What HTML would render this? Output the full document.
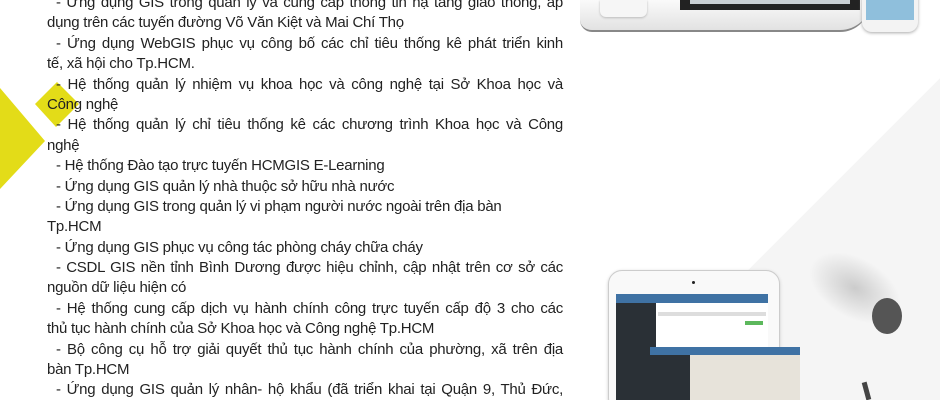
<!DOCTYPE html>
<html><head><meta charset="utf-8"><style>
html,body{margin:0;padding:0;width:940px;height:400px;overflow:hidden;background:#fff;position:relative}
.t{position:absolute;left:47px;top:-7px;width:516px;font-family:"Liberation Sans",sans-serif;font-size:15px;letter-spacing:-0.25px;line-height:20.4px;color:#222}
.t div{white-space:nowrap;height:20.4px}
.j{text-align:justify;text-align-last:justify;white-space:normal!important}
.i{padding-left:9px}
.abs{position:absolute}
</style></head><body>
<div class="abs" style="right:0;top:0;width:940px;height:400px;background:linear-gradient(135deg,transparent 76%,#f5f5f5 76%)"></div>
<svg class="abs" style="left:0;top:0" width="100" height="200">
<polygon points="0,88 45,141 0,189" fill="#e3dc18"/>
<polygon points="35,104 57,82 79,104 56,127" fill="#e3dc18"/>
</svg>
<!-- laptop top -->
<div class="abs" style="left:580px;top:0;width:290px;height:30px;background:linear-gradient(#fafafa,#e2e2e2);border-radius:0 0 30px 12px;border-bottom:2px solid #888"></div>
<div class="abs" style="left:680px;top:0;width:180px;height:10px;background:#222"></div>
<div class="abs" style="left:690px;top:0;width:160px;height:4px;background:#c9cfd3"></div>
<div class="abs" style="left:600px;top:0;width:47px;height:17px;background:#f6f6f6;border-radius:0 0 6px 6px;box-shadow:0 1px 2px #bbb"></div>
<div class="abs" style="left:862px;top:-10px;width:56px;height:42px;background:#f3f3f3;border-radius:0 0 10px 10px;box-shadow:0 1px 3px #aaa"></div>
<div class="abs" style="left:866px;top:0;width:48px;height:20px;background:#8fbfdc"></div>
<!-- tablet -->
<div class="abs" style="left:608px;top:270px;width:170px;height:140px;background:#f9f9f9;border:1px solid #ccc;border-radius:14px;box-shadow:0 1px 3px #ccc"></div>
<div class="abs" style="left:692px;top:281px;width:3px;height:3px;background:#222;border-radius:50%"></div>
<div class="abs" style="left:616px;top:294px;width:152px;height:110px;background:#fff"></div>
<div class="abs" style="left:616px;top:294px;width:152px;height:9px;background:#3f72a4"></div>
<div class="abs" style="left:616px;top:303px;width:40px;height:100px;background:#2a3036"></div>
<div class="abs" style="left:658px;top:312px;width:108px;height:4px;background:#ddd"></div>
<div class="abs" style="left:745px;top:321px;width:18px;height:4px;background:#5cb85c"></div>
<div class="abs" style="left:650px;top:347px;width:150px;height:60px;background:#e7e3da"></div>
<div class="abs" style="left:650px;top:347px;width:150px;height:8px;background:#3f72a4"></div>
<div class="abs" style="left:650px;top:355px;width:40px;height:50px;background:#2a3036"></div>
<!-- pen cup -->
<div class="abs" style="left:805px;top:258px;width:100px;height:60px;border-radius:50%;background:radial-gradient(#999,transparent 70%);opacity:.45;transform:rotate(30deg)"></div>
<div class="abs" style="left:872px;top:298px;width:30px;height:36px;border-radius:50%;background:#555"></div>
<div class="abs" style="left:864px;top:382px;width:5px;height:18px;background:#444;transform:rotate(-15deg)"></div>
<div class="t">
<div class="j i">- Ứng dụng GIS trong quản lý và cung cấp thông tin hạ tầng giao thông, áp</div>
<div>dụng trên các tuyến đường Võ Văn Kiệt và Mai Chí Thọ</div>
<div class="j i">- Ứng dụng WebGIS phục vụ công bố các chỉ tiêu thống kê phát triển kinh</div>
<div>tế, xã hội cho Tp.HCM.</div>
<div class="j i">- Hệ thống quản lý nhiệm vụ khoa học và công nghệ tại Sở Khoa học và</div>
<div>Công nghệ</div>
<div class="j i">- Hệ thống quản lý chỉ tiêu thống kê các chương trình Khoa học và Công</div>
<div>nghệ</div>
<div class="i">- Hệ thống Đào tạo trực tuyến HCMGIS E-Learning</div>
<div class="i">- Ứng dụng GIS quản lý nhà thuộc sở hữu nhà nước</div>
<div class="i">- Ứng dụng GIS trong quản lý vi phạm người nước ngoài trên địa bàn</div>
<div>Tp.HCM</div>
<div class="i">- Ứng dụng GIS phục vụ công tác phòng cháy chữa cháy</div>
<div class="j i">- CSDL GIS nền tỉnh Bình Dương được hiệu chỉnh, cập nhật trên cơ sở các</div>
<div>nguồn dữ liệu hiện có</div>
<div class="j i">- Hệ thống cung cấp dịch vụ hành chính công trực tuyến cấp độ 3 cho các</div>
<div>thủ tục hành chính của Sở Khoa học và Công nghệ Tp.HCM</div>
<div class="j i">- Bộ công cụ hỗ trợ giải quyết thủ tục hành chính của phường, xã trên địa</div>
<div>bàn Tp.HCM</div>
<div class="j i">- Ứng dụng GIS quản lý nhân- hộ khẩu (đã triển khai tại Quận 9, Thủ Đức,</div>
</div>
</body></html>
